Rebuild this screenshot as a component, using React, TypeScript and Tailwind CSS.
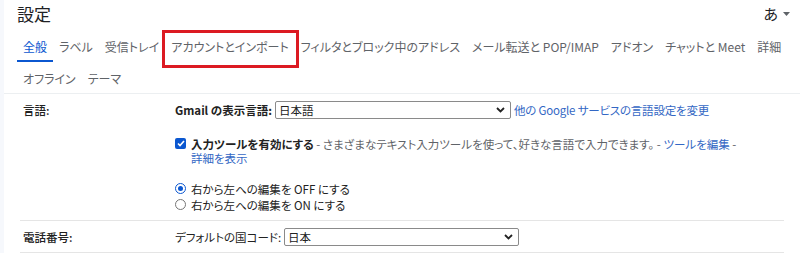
import * as React from 'react';

const tabsRow1 = [
  '全般',
  'ラベル',
  '受信トレイ',
  'アカウントとインポート',
  'フィルタとブロック中のアドレス',
  'メール転送と POP/IMAP',
  'アドオン',
  'チャットと Meet',
  '詳細',
];
const tabsRow2 = ['オフライン', 'テーマ'];

const Chevron = () => (
  <svg width="9" height="6" viewBox="0 0 9 6" className="text-[#222]">
    <path d="M1 1l3.5 3.5L8 1" fill="none" stroke="currentColor" strokeWidth="1.8" />
  </svg>
);

const FakeSelect = ({ value, width }: { value: string; width: string }) => (
  <div className={`${width} h-[18px] flex items-center justify-between border border-[#8a8a8a] rounded-[2px] pl-[3px] pr-[5px] bg-white text-[#222]`}>
    <span>{value}</span>
    <Chevron />
  </div>
);

function Tab({ label, active, marked, tall }: { label: string; active?: boolean; marked?: boolean; tall?: boolean }) {
  return (
    <div className={`relative flex items-center px-[6px] ${tall ? 'h-[31px] pt-[3px]' : 'h-[30px]'}`}>
      <span className={active ? 'text-[#0b57d0]' : 'text-[#5f6368]'}>{label}</span>
      {active && <div className="absolute left-0 right-0 bottom-0 h-[2px] bg-[#0b57d0]" />}
      {marked && <div className="absolute left-[-3px] right-[-4px] top-[-2px] bottom-[-6px] border-[3px] border-[#dc1a22]" />}
    </div>
  );
}

export default function App() {
  return (
    <div className="w-[800px] h-[253px] overflow-hidden bg-white border-l-[4px] border-[#f6f8fc] text-[11.5px] leading-[14px] text-[#222] [font-family:'Noto_Sans_CJK_JP',sans-serif] [font-feature-settings:'palt']">
      <div className="flex justify-between items-center h-[28px] pl-[13px] pr-[10px]">
        <h1 className="text-[17px] text-[#202124]">設定</h1>
        <div className="flex items-center gap-[5px] text-[15px] text-[#202124]">
          <span>あ</span>
          <svg width="7" height="4" viewBox="0 0 7 4"><path d="M0 0h7L3.5 4z" fill="#5f6368" /></svg>
        </div>
      </div>
      <div className="pl-[13px] pt-[4px] text-[12px]">
        <div className="flex">
          {tabsRow1.map((t, i) => (
            <Tab key={t} label={t} active={i === 0} marked={i === 3} />
          ))}
        </div>
        <div className="flex">
          {tabsRow2.map((t) => (
            <Tab key={t} label={t} tall />
          ))}
        </div>
      </div>
      <div className="h-[1px] bg-[#eceff1]" />

      <div className="px-[16px]">
        <div className="flex border-b border-[#e5e5e5] pt-[7px] pb-[8px]">
          <div className="w-[155px] pl-[3px] font-medium pt-[2px]">言語:</div>
          <div className="flex-1">
            <div className="flex items-center gap-[3px]">
              <span className="font-semibold">Gmail の表示言語:</span>
              <FakeSelect value="日本語" width="w-[236px]" />
              <a className="text-[#3367c4] tracking-[-0.2px]">他の Google サービスの言語設定を変更</a>
            </div>
            <div className="flex mt-[18px] gap-[5px]">
              <div className="mt-[1px] w-[11px] h-[11px] rounded-[2px] bg-[#0b57d0] flex items-center justify-center shrink-0">
                <svg width="8" height="7" viewBox="0 0 8 7"><path d="M1 3.5l2 2L7 1" fill="none" stroke="white" strokeWidth="1.6" /></svg>
              </div>
              <div>
                <div className="flex whitespace-pre h-[14px]">
                  <span className="inline-block font-semibold">入力ツールを有効にする</span>
                  <span className="inline-block text-[#5f6368]"> - さまざまなテキスト入力ツールを使って、好きな言語で入力できます。 - </span>
                  <a className="inline-block text-[#3367c4]">ツールを編集</a>
                  <span className="inline-block text-[#5f6368]"> -</span>
                </div>
                <div className="flex h-[14px]"><a className="inline-block text-[#3367c4]">詳細を表示</a></div>
              </div>
            </div>
            <div className="mt-[16px] flex flex-col gap-[1px]">
              <label className="flex items-center gap-[5px] h-[15px]">
                <span className="w-[11px] h-[11px] rounded-full border border-[#0b57d0] flex items-center justify-center">
                  <span className="w-[5px] h-[5px] rounded-full bg-[#0b57d0]" />
                </span>
                右から左への編集を OFF にする
              </label>
              <label className="flex items-center gap-[5px] h-[15px]">
                <span className="w-[11px] h-[11px] rounded-full border border-[#767676]" />
                右から左への編集を ON にする
              </label>
            </div>
          </div>
        </div>
        <div className="flex border-b border-[#e5e5e5] pt-[7px] pb-[6px] items-center">
          <div className="w-[155px] pl-[3px] font-medium">電話番号:</div>
          <div className="flex items-center gap-[3px]">
            <span>デフォルトの国コード:</span>
            <FakeSelect value="日本" width="w-[235px]" />
          </div>
        </div>
      </div>
    </div>
  );
}
